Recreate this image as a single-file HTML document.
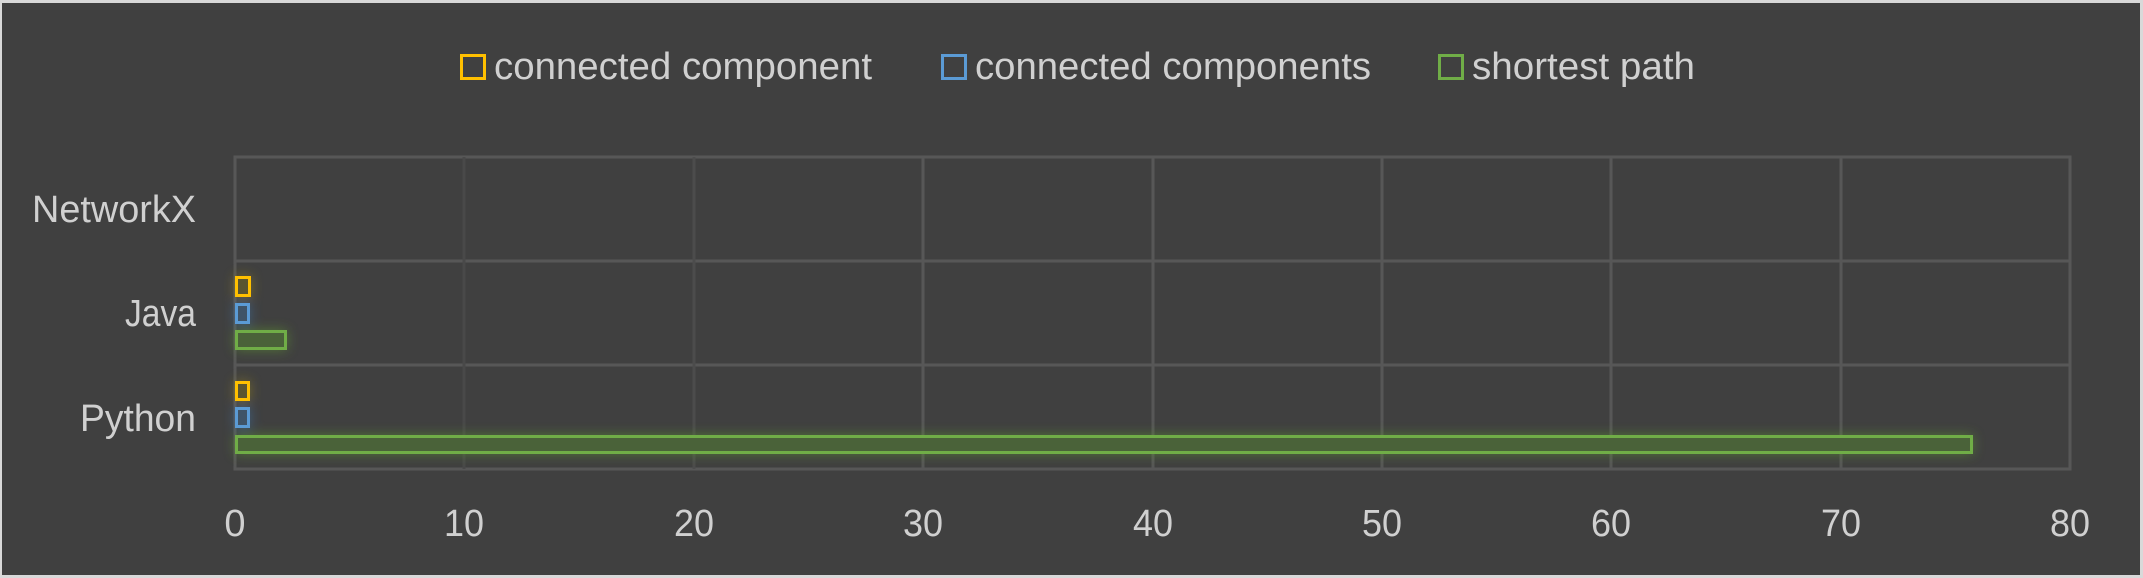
<!DOCTYPE html>
<html><head><style>
html,body{margin:0;padding:0;background:#d9d9d9;}
svg{display:block;}
text{font-family:"Liberation Sans",sans-serif;fill:#d0d0d0;}
</style></head><body>
<svg width="2143" height="578" xmlns="http://www.w3.org/2000/svg">
<defs>
<filter id="g" x="-50%" y="-100%" width="200%" height="300%"><feGaussianBlur stdDeviation="6"/></filter>
</defs>
<rect x="0" y="0" width="2143" height="578" fill="#d9d9d9"/>
<rect x="2" y="3" width="2138" height="572" fill="#404040"/>
<!-- grid -->
<g stroke="#575757" stroke-width="3" fill="none">
<rect x="235" y="157" width="1835" height="312"/>
<line x1="235" y1="261" x2="2070" y2="261"/>
<line x1="235" y1="365" x2="2070" y2="365"/>
<line x1="464" y1="157" x2="464" y2="469" stroke="#494949"/>
<line x1="694" y1="157" x2="694" y2="469" stroke="#4c4c4c"/>
<line x1="923" y1="157" x2="923" y2="469"/>
<line x1="1153" y1="157" x2="1153" y2="469"/>
<line x1="1382" y1="157" x2="1382" y2="469"/>
<line x1="1611" y1="157" x2="1611" y2="469"/>
<line x1="1841" y1="157" x2="1841" y2="469"/>
</g>
<!-- glows -->
<g filter="url(#g)" opacity="0.7">
<rect x="235" y="276" width="16" height="21" fill="#8a7a20"/>
<rect x="235" y="303" width="15" height="21" fill="#3d6c99"/>
<rect x="235" y="330" width="52" height="20" fill="#5a8a30"/>
<rect x="235" y="381" width="15" height="20" fill="#8a7a20"/>
<rect x="235" y="407" width="15" height="21" fill="#3d6c99"/>
<rect x="235" y="435" width="1738" height="19" fill="#5a8a30"/>
</g>
<!-- bars -->
<g stroke-width="3">
<rect x="236.5" y="277.5" width="13" height="18" fill="#5a5530" stroke="#ffc000"/>
<rect x="236.5" y="304.5" width="12" height="18" fill="#3f5468" stroke="#5b9bd5"/>
<rect x="236.5" y="331.5" width="49" height="17" fill="#4a6239" stroke="#70ad47"/>
<rect x="236.5" y="382.5" width="12" height="17" fill="#5a5530" stroke="#ffc000"/>
<rect x="236.5" y="408.5" width="12" height="18" fill="#3f5468" stroke="#5b9bd5"/>
<rect x="236.5" y="436.5" width="1735" height="16" fill="#4a6239" stroke="#70ad47"/>
</g>
<!-- legend -->
<g fill="none" stroke-width="3">
<rect x="461.5" y="55.5" width="23" height="23" stroke="#ffc000"/>
<rect x="942.5" y="55.5" width="23" height="23" stroke="#5b9bd5"/>
<rect x="1439.5" y="55.5" width="23" height="23" stroke="#70ad47"/>
</g>
<g font-size="38">
<text x="494" y="79" textLength="378" lengthAdjust="spacingAndGlyphs">connected component</text>
<text x="975" y="79" textLength="396" lengthAdjust="spacingAndGlyphs">connected components</text>
<text x="1472" y="79" textLength="223" lengthAdjust="spacingAndGlyphs">shortest path</text>
</g>
<!-- y labels -->
<g font-size="38" text-anchor="end">
<text x="196" y="222" textLength="164" lengthAdjust="spacingAndGlyphs">NetworkX</text>
<text x="196" y="326" textLength="71" lengthAdjust="spacingAndGlyphs">Java</text>
<text x="196" y="431" textLength="116" lengthAdjust="spacingAndGlyphs">Python</text>
</g>
<!-- x labels -->
<g font-size="38" text-anchor="middle">
<text x="235" y="536">0</text>
<text x="464" y="536" textLength="40" lengthAdjust="spacingAndGlyphs">10</text>
<text x="694" y="536" textLength="40" lengthAdjust="spacingAndGlyphs">20</text>
<text x="923" y="536" textLength="40" lengthAdjust="spacingAndGlyphs">30</text>
<text x="1153" y="536" textLength="40" lengthAdjust="spacingAndGlyphs">40</text>
<text x="1382" y="536" textLength="40" lengthAdjust="spacingAndGlyphs">50</text>
<text x="1611" y="536" textLength="40" lengthAdjust="spacingAndGlyphs">60</text>
<text x="1841" y="536" textLength="40" lengthAdjust="spacingAndGlyphs">70</text>
<text x="2070" y="536" textLength="40" lengthAdjust="spacingAndGlyphs">80</text>
</g>
</svg>
</body></html>
